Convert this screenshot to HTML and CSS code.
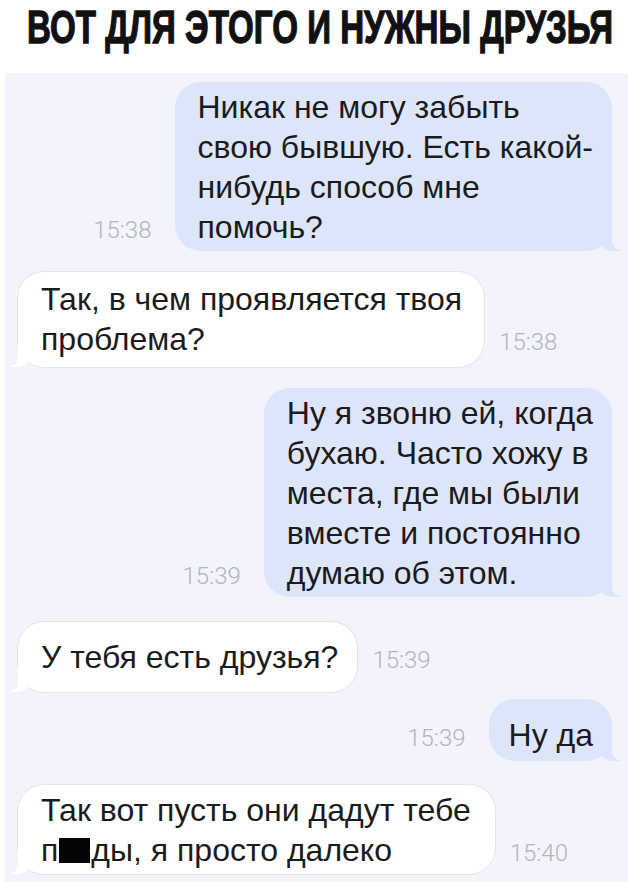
FILE: index.html
```html
<!DOCTYPE html>
<html lang="ru">
<head>
  <meta charset="utf-8">
  <title>Вот для этого и нужны друзья</title>
  <link rel="stylesheet" href="styles.css">
</head>
<body>
  <div class="title">
    <h1>ВОТ ДЛЯ ЭТОГО И НУЖНЫ ДРУЗЬЯ</h1>
  </div>

  <div class="chat">
    <div class="row out r1">
      <span class="time">15:38</span>
      <div class="bubble">Никак не могу забыть<br>свою бывшую. Есть какой-<br>нибудь способ мне<br>помочь?</div>
    </div>

    <div class="row in r2">
      <div class="bubble">Так, в чем проявляется твоя<br>проблема?</div>
      <span class="time">15:38</span>
    </div>

    <div class="row out r3">
      <span class="time">15:39</span>
      <div class="bubble">Ну я звоню ей, когда<br>бухаю. Часто хожу в<br>места, где мы были<br>вместе и постоянно<br>думаю об этом.</div>
    </div>

    <div class="row in r4">
      <div class="bubble single">У тебя есть друзья?</div>
      <span class="time">15:39</span>
    </div>

    <div class="row out r5">
      <span class="time">15:39</span>
      <div class="bubble short">Ну да</div>
    </div>

    <div class="row in r6">
      <div class="bubble">Так вот пусть они дадут тебе<br>п<span class="censor"></span>ды, я просто далеко</div>
      <span class="time">15:40</span>
    </div>
  </div>
</body>
</html>
```

FILE: styles.css
```css
html, body {
  margin: 0;
  padding: 0;
  background: #ffffff;
}

body {
  width: 640px;
  height: 882px;
  overflow: hidden;
  font-family: "Liberation Sans", Arial, sans-serif;
  color: #1b1b1d;
}

/* header */
.title {
  height: 73px;
  display: flex;
  justify-content: center;
}

.title h1 {
  flex-shrink: 0;
  margin: 0;
  padding-top: 1px;
  font-size: 46px;
  line-height: 52px;
  font-weight: bold;
  color: #111;
  -webkit-text-stroke: 1.3px #111;
  white-space: nowrap;
  transform: scaleX(0.72);
  transform-origin: center top;
}

/* chat panel */
.chat {
  margin: 0 12px 0 5px;
  height: 809px;
  background: #f3f3fb;
  padding-top: 9px;
  box-sizing: border-box;
}

.row {
  display: flex;
  align-items: last baseline;
}

.row.out {
  justify-content: flex-end;
  padding-right: 16px;
}

.row.in {
  padding-left: 13px;
}

.r2 { margin-top: 21px; }
.r3 { margin-top: 21px; }
.r4 { margin-top: 25px; }
.r5 { margin-top: 7px; }
.r6 { margin-top: 24px; }

.r2 .bubble {
  padding-top: 7px;
  padding-bottom: 8px;
  padding-right: 22px;
}

.r6 .bubble {
  padding-right: 24px;
}

.time {
  font-family: Roboto, "Liberation Sans", sans-serif;
  font-weight: 300;
  font-size: 24px;
  color: #b4b4bc;
}

.row.out .time {
  margin-right: 23px;
}

.row.in .time {
  margin-left: 15px;
}

.bubble {
  position: relative;
  font-size: 32px;
  line-height: 40px;
  padding: 5px 19px 4px 23px;
  border-radius: 26px;
  white-space: nowrap;
}

.bubble.single {
  padding-top: 15px;
  padding-bottom: 15px;
}

.bubble.short {
  padding: 16px 19px 6px 20px;
}

.row.out .bubble {
  background: #dde5fa;
}

.row.in .bubble {
  background: #ffffff;
  box-shadow: 0 0 0 1px #e3e3ec;
}

/* tails */
.bubble::before,
.bubble::after {
  content: "";
  position: absolute;
  bottom: 0;
  height: 24px;
}

.row.out .bubble::before {
  right: -9px;
  width: 23px;
  background: #dde5fa;
  border-bottom-left-radius: 16px 14px;
}

.row.out .bubble::after {
  right: -16px;
  width: 16px;
  background: #f3f3fb;
  border-bottom-left-radius: 10px;
}

.row.in .bubble::before {
  left: -9px;
  width: 23px;
  background: #ffffff;
  border-bottom-right-radius: 16px 14px;
}

.row.in .bubble::after {
  left: -13px;
  width: 13px;
  background: #f3f3fb;
  border-bottom-right-radius: 10px;
}

.censor {
  display: inline-block;
  width: 31px;
  height: 25px;
  margin: 0 1px 0 1px;
  vertical-align: -2px;
  background: #050505;
}
```
